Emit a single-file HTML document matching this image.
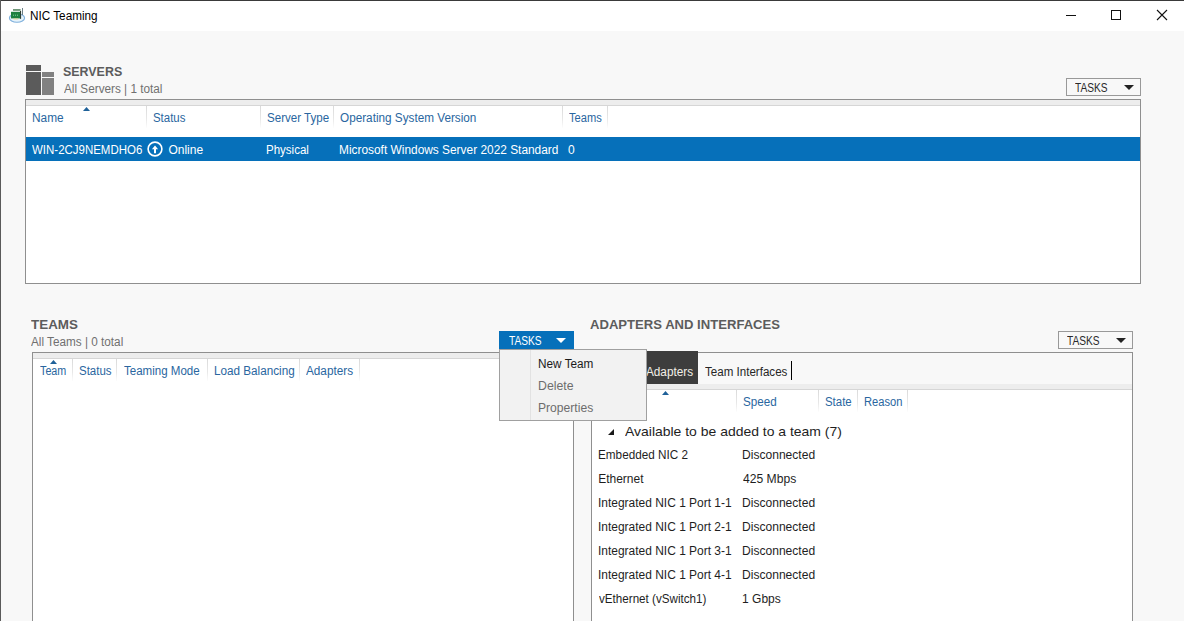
<!DOCTYPE html>
<html><head><meta charset="utf-8">
<style>
*{margin:0;padding:0;box-sizing:border-box}
html,body{width:1184px;height:621px;overflow:hidden;background:#f8f8f8;font-family:"Liberation Sans",sans-serif;font-size:12px;color:#1e1e1e}
.a{position:absolute}
.tx{position:absolute;white-space:pre}
.sep{position:absolute;width:1px;background:linear-gradient(#dadada,#e8e8e8 60%,#fdfdfd)}
.panel{position:absolute;border:1px solid #8f8f8f;background:#fff}
.strip{position:absolute;left:0;right:0;top:0;height:6px;background:#ededed;border-bottom:1px solid #d6d6d6}
.arrowup{position:absolute;width:7px;height:4px;background:#1f6199;clip-path:polygon(0 100%,50% 0,100% 100%)}
.tasks{position:absolute;border:1px solid #999;background:#f8f8f8;height:18px;width:75px}
.tri{position:absolute;width:0;height:0;border-left:5px solid transparent;border-right:5px solid transparent;border-top:5px solid #222}
</style></head><body>
<!-- window frame -->
<div class="a" style="left:0;top:0;width:1184px;height:1px;background:#3a3a3a"></div>
<div class="a" style="left:0;top:0;width:1px;height:621px;background:#5a5a5a"></div>
<div class="a" style="left:1px;top:1px;width:1183px;height:30px;background:#fff"></div>
<!-- app icon -->
<svg class="a" style="left:8px;top:7px" width="18" height="17" viewBox="0 0 18 17">
  <ellipse cx="9" cy="11" rx="7.6" ry="4.3" fill="#e6f3fb" stroke="#7fb0dc" stroke-width="1.1"/>
  <rect x="5" y="2.2" width="7.6" height="1.5" fill="#4d7d58"/>
  <rect x="14" y="1" width="1" height="7" fill="#6c7f86"/>
  <rect x="3" y="4.8" width="9.6" height="6.6" fill="#1f8040"/>
  <rect x="12" y="4" width="1.1" height="7.8" fill="#2e3d33"/>
  <rect x="5" y="7.7" width="1" height="1" fill="#7fd59a"/><rect x="7" y="7.7" width="1" height="1" fill="#7fd59a"/><rect x="9" y="7.7" width="1" height="1" fill="#7fd59a"/>
  <rect x="5.5" y="11.4" width="4.8" height="1" fill="#d9cf8a"/>
</svg>
<!-- window controls -->
<div class="a" style="left:1066px;top:15px;width:10px;height:1px;background:#111"></div>
<div class="a" style="left:1111px;top:10px;width:10px;height:10px;border:1px solid #111"></div>
<svg class="a" style="left:1156px;top:9px" width="12" height="12" viewBox="0 0 12 12"><path d="M1 1L11 11M11 1L1 11" stroke="#111" stroke-width="1.1"/></svg>

<!-- SERVERS -->
<div class="a" style="left:26px;top:65px;width:15px;height:6px;background:#5b5b5b"></div>
<div class="a" style="left:26px;top:72px;width:15px;height:23px;background:#5b5b5b"></div>
<div class="a" style="left:42px;top:72px;width:12px;height:5px;background:#818181"></div>
<div class="a" style="left:42px;top:78px;width:12px;height:17px;background:#818181"></div>
<div class="tasks" style="left:1066px;top:78px"><span class="tri" style="left:57px;top:6px"></span></div>

<div class="panel" style="left:25px;top:99px;width:1116px;height:185px">
  <div class="strip"></div>
</div>
<div class="sep" style="left:146px;top:106px;height:22px"></div>
<div class="sep" style="left:260px;top:106px;height:22px"></div>
<div class="sep" style="left:333px;top:106px;height:22px"></div>
<div class="sep" style="left:562px;top:106px;height:22px"></div>
<div class="sep" style="left:607px;top:106px;height:22px"></div>
<div class="arrowup" style="left:83px;top:107px"></div>
<div class="a" style="left:26px;top:137px;width:1114px;height:24px;background:#0670ba"></div>
<svg class="a" style="left:147px;top:141px" width="16" height="16" viewBox="0 0 16 16"><circle cx="8" cy="8" r="6.9" fill="none" stroke="#fff" stroke-width="1.6"/><path d="M8 12.2V7" stroke="#fff" stroke-width="2"/><path d="M4.9 8.2L8 4.4L11.1 8.2Z" fill="#fff"/></svg>

<!-- TEAMS -->
<div class="panel" style="left:32px;top:352px;width:542px;height:280px">
  <div class="strip"></div>
</div>
<div class="sep" style="left:72px;top:359px;height:22px"></div>
<div class="sep" style="left:116px;top:359px;height:22px"></div>
<div class="sep" style="left:207px;top:359px;height:22px"></div>
<div class="sep" style="left:299px;top:359px;height:22px"></div>
<div class="sep" style="left:359px;top:359px;height:22px"></div>
<div class="arrowup" style="left:50px;top:360px"></div>

<!-- ADAPTERS -->
<div class="tasks" style="left:1058px;top:331px"><span class="tri" style="left:57px;top:6px"></span></div>
<div class="panel" style="left:591px;top:352px;width:542px;height:280px"></div>
<div class="a" style="left:592px;top:353px;width:540px;height:31px;background:#f8f8f8"></div>
<div class="a" style="left:592px;top:384px;width:540px;height:6px;background:#ededed;border-bottom:1px solid #d6d6d6"></div>
<div class="a" style="left:592px;top:351px;width:106px;height:33px;background:#3d3d3d"></div>
<div class="a" style="left:791px;top:361px;width:1px;height:19px;background:#000"></div>
<div class="sep" style="left:736px;top:390px;height:22px"></div>
<div class="sep" style="left:818px;top:390px;height:22px"></div>
<div class="sep" style="left:857px;top:390px;height:22px"></div>
<div class="sep" style="left:907px;top:390px;height:22px"></div>
<div class="arrowup" style="left:662px;top:391px"></div>
<svg class="a" style="left:608px;top:429px" width="6" height="6" viewBox="0 0 6 6"><path d="M6 0V6H0Z" fill="#1a1a1a"/></svg>

<div class="tx" style="left:30.42px;top:9.84px;font-size:12px;line-height:12px;font-weight:400;color:#000;transform:scaleX(0.9779);transform-origin:0 0;">NIC Teaming</div>
<div class="tx" style="left:63.28px;top:64.57px;font-size:13.5px;line-height:13.5px;font-weight:700;color:#5c5c5c;transform:scaleX(0.9206);transform-origin:0 0;">SERVERS</div>
<div class="tx" style="left:64.20px;top:82.84px;font-size:12px;line-height:12px;font-weight:400;color:#707070;transform:scaleX(0.9800);transform-origin:0 0;">All Servers | 1 total</div>
<div class="tx" style="left:1075.30px;top:81.84px;font-size:12px;line-height:12px;font-weight:400;color:#2a2a2a;transform:scaleX(0.8474);transform-origin:0 0;">TASKS</div>
<div class="tx" style="left:31.61px;top:111.84px;font-size:12px;line-height:12px;font-weight:400;color:#2966a0;transform:scaleX(0.9871);transform-origin:0 0;">Name</div>
<div class="tx" style="left:153.25px;top:111.84px;font-size:12px;line-height:12px;font-weight:400;color:#2966a0;transform:scaleX(0.9515);transform-origin:0 0;">Status</div>
<div class="tx" style="left:267.04px;top:111.84px;font-size:12px;line-height:12px;font-weight:400;color:#2966a0;transform:scaleX(0.9635);transform-origin:0 0;">Server Type</div>
<div class="tx" style="left:340.30px;top:111.84px;font-size:12px;line-height:12px;font-weight:400;color:#2966a0;transform:scaleX(0.9784);transform-origin:0 0;">Operating System Version</div>
<div class="tx" style="left:568.80px;top:111.84px;font-size:12px;line-height:12px;font-weight:400;color:#2966a0;transform:scaleX(0.9257);transform-origin:0 0;">Teams</div>
<div class="tx" style="left:31.50px;top:143.84px;font-size:12px;line-height:12px;font-weight:400;color:#fff;transform:scaleX(0.9565);transform-origin:0 0;">WIN-2CJ9NEMDHO6</div>
<div class="tx" style="left:168.40px;top:143.84px;font-size:12px;line-height:12px;font-weight:400;color:#fff;">Online</div>
<div class="tx" style="left:266.24px;top:143.84px;font-size:12px;line-height:12px;font-weight:400;color:#fff;transform:scaleX(0.9605);transform-origin:0 0;">Physical</div>
<div class="tx" style="left:338.51px;top:143.84px;font-size:12px;line-height:12px;font-weight:400;color:#fff;transform:scaleX(0.9909);transform-origin:0 0;">Microsoft Windows Server 2022 Standard</div>
<div class="tx" style="left:568.00px;top:143.84px;font-size:12px;line-height:12px;font-weight:400;color:#fff;">0</div>
<div class="tx" style="left:31.30px;top:317.57px;font-size:13.5px;line-height:13.5px;font-weight:700;color:#5c5c5c;transform:scaleX(0.9936);transform-origin:0 0;">TEAMS</div>
<div class="tx" style="left:31.30px;top:335.84px;font-size:12px;line-height:12px;font-weight:400;color:#707070;transform:scaleX(0.9787);transform-origin:0 0;">All Teams | 0 total</div>
<div class="tx" style="left:39.80px;top:364.84px;font-size:12px;line-height:12px;font-weight:400;color:#2966a0;transform:scaleX(0.8966);transform-origin:0 0;">Team</div>
<div class="tx" style="left:78.54px;top:364.84px;font-size:12px;line-height:12px;font-weight:400;color:#2966a0;transform:scaleX(0.9576);transform-origin:0 0;">Status</div>
<div class="tx" style="left:124.00px;top:364.84px;font-size:12px;line-height:12px;font-weight:400;color:#2966a0;transform:scaleX(0.9615);transform-origin:0 0;">Teaming Mode</div>
<div class="tx" style="left:213.82px;top:364.84px;font-size:12px;line-height:12px;font-weight:400;color:#2966a0;transform:scaleX(0.9753);transform-origin:0 0;">Load Balancing</div>
<div class="tx" style="left:306.20px;top:364.84px;font-size:12px;line-height:12px;font-weight:400;color:#2966a0;transform:scaleX(0.9792);transform-origin:0 0;">Adapters</div>
<div class="tx" style="left:590.30px;top:317.57px;font-size:13.5px;line-height:13.5px;font-weight:700;color:#5c5c5c;transform:scaleX(0.9694);transform-origin:0 0;">ADAPTERS AND INTERFACES</div>
<div class="tx" style="left:1067.30px;top:334.84px;font-size:12px;line-height:12px;font-weight:400;color:#2a2a2a;transform:scaleX(0.8474);transform-origin:0 0;">TASKS</div>
<div class="tx" style="left:645.80px;top:365.84px;font-size:12px;line-height:12px;font-weight:400;color:#f4f0e8;transform:scaleX(0.9792);transform-origin:0 0;">Adapters</div>
<div class="tx" style="left:704.50px;top:365.84px;font-size:12px;line-height:12px;font-weight:400;color:#262626;transform:scaleX(0.9647);transform-origin:0 0;">Team Interfaces</div>
<div class="tx" style="left:742.53px;top:395.84px;font-size:12px;line-height:12px;font-weight:400;color:#2966a0;transform:scaleX(0.9697);transform-origin:0 0;">Speed</div>
<div class="tx" style="left:825.45px;top:395.84px;font-size:12px;line-height:12px;font-weight:400;color:#2966a0;transform:scaleX(0.9519);transform-origin:0 0;">State</div>
<div class="tx" style="left:864.07px;top:395.84px;font-size:12px;line-height:12px;font-weight:400;color:#2966a0;transform:scaleX(0.9300);transform-origin:0 0;">Reason</div>
<div class="tx" style="left:625.30px;top:425.17px;font-size:13.5px;line-height:13.5px;font-weight:400;color:#1e1e1e;transform:scaleX(1.0335);transform-origin:0 0;">Available to be added to a team (7)</div>
<div class="tx" style="left:598.22px;top:448.84px;font-size:12px;line-height:12px;font-weight:400;color:#1e1e1e;transform:scaleX(0.9780);transform-origin:0 0;">Embedded NIC 2</div>
<div class="tx" style="left:598.20px;top:472.84px;font-size:12px;line-height:12px;font-weight:400;color:#1e1e1e;">Ethernet</div>
<div class="tx" style="left:598.20px;top:496.84px;font-size:12px;line-height:12px;font-weight:400;color:#1e1e1e;transform:scaleX(0.9970);transform-origin:0 0;">Integrated NIC 1 Port 1-1</div>
<div class="tx" style="left:598.20px;top:520.84px;font-size:12px;line-height:12px;font-weight:400;color:#1e1e1e;transform:scaleX(0.9970);transform-origin:0 0;">Integrated NIC 1 Port 2-1</div>
<div class="tx" style="left:598.20px;top:544.84px;font-size:12px;line-height:12px;font-weight:400;color:#1e1e1e;transform:scaleX(0.9970);transform-origin:0 0;">Integrated NIC 1 Port 3-1</div>
<div class="tx" style="left:598.20px;top:568.84px;font-size:12px;line-height:12px;font-weight:400;color:#1e1e1e;transform:scaleX(0.9970);transform-origin:0 0;">Integrated NIC 1 Port 4-1</div>
<div class="tx" style="left:599.20px;top:592.84px;font-size:12px;line-height:12px;font-weight:400;color:#1e1e1e;transform:scaleX(0.9700);transform-origin:0 0;">vEthernet (vSwitch1)</div>
<div class="tx" style="left:742.09px;top:448.84px;font-size:12px;line-height:12px;font-weight:400;color:#1e1e1e;transform:scaleX(1.0056);transform-origin:0 0;">Disconnected</div>
<div class="tx" style="left:743.10px;top:472.84px;font-size:12px;line-height:12px;font-weight:400;color:#1e1e1e;transform:scaleX(1.0096);transform-origin:0 0;">425 Mbps</div>
<div class="tx" style="left:742.09px;top:496.84px;font-size:12px;line-height:12px;font-weight:400;color:#1e1e1e;transform:scaleX(1.0056);transform-origin:0 0;">Disconnected</div>
<div class="tx" style="left:742.09px;top:520.84px;font-size:12px;line-height:12px;font-weight:400;color:#1e1e1e;transform:scaleX(1.0056);transform-origin:0 0;">Disconnected</div>
<div class="tx" style="left:742.09px;top:544.84px;font-size:12px;line-height:12px;font-weight:400;color:#1e1e1e;transform:scaleX(1.0056);transform-origin:0 0;">Disconnected</div>
<div class="tx" style="left:742.09px;top:568.84px;font-size:12px;line-height:12px;font-weight:400;color:#1e1e1e;transform:scaleX(1.0056);transform-origin:0 0;">Disconnected</div>
<div class="tx" style="left:742.10px;top:592.84px;font-size:12px;line-height:12px;font-weight:400;color:#1e1e1e;">1 Gbps</div>

<!-- TEAMS TASKS active + menu -->
<div class="a" style="left:499px;top:331px;width:75px;height:18px;background:#0670ba"></div>
<div class="a" style="left:556px;top:338px;width:0;height:0;border-left:5px solid transparent;border-right:5px solid transparent;border-top:5px solid #fff"></div>
<div class="a" style="left:499px;top:349px;width:148px;height:72px;background:#f2f2f2;border:1px solid #a0a0a0"></div>
<div class="a" style="left:530px;top:350px;width:1px;height:70px;background:#e2e2e2"></div>
<div class="tx" style="left:508.50px;top:334.84px;font-size:12px;line-height:12px;font-weight:400;color:#fff;transform:scaleX(0.8474);transform-origin:0 0;">TASKS</div>
<div class="tx" style="left:538.22px;top:357.84px;font-size:12px;line-height:12px;font-weight:400;color:#1a1a1a;transform:scaleX(0.9818);transform-origin:0 0;">New Team</div>
<div class="tx" style="left:538.18px;top:379.84px;font-size:12px;line-height:12px;font-weight:400;color:#6d6d6d;transform:scaleX(1.0242);transform-origin:0 0;">Delete</div>
<div class="tx" style="left:538.19px;top:401.84px;font-size:12px;line-height:12px;font-weight:400;color:#6d6d6d;transform:scaleX(1.0094);transform-origin:0 0;">Properties</div>
</body></html>
